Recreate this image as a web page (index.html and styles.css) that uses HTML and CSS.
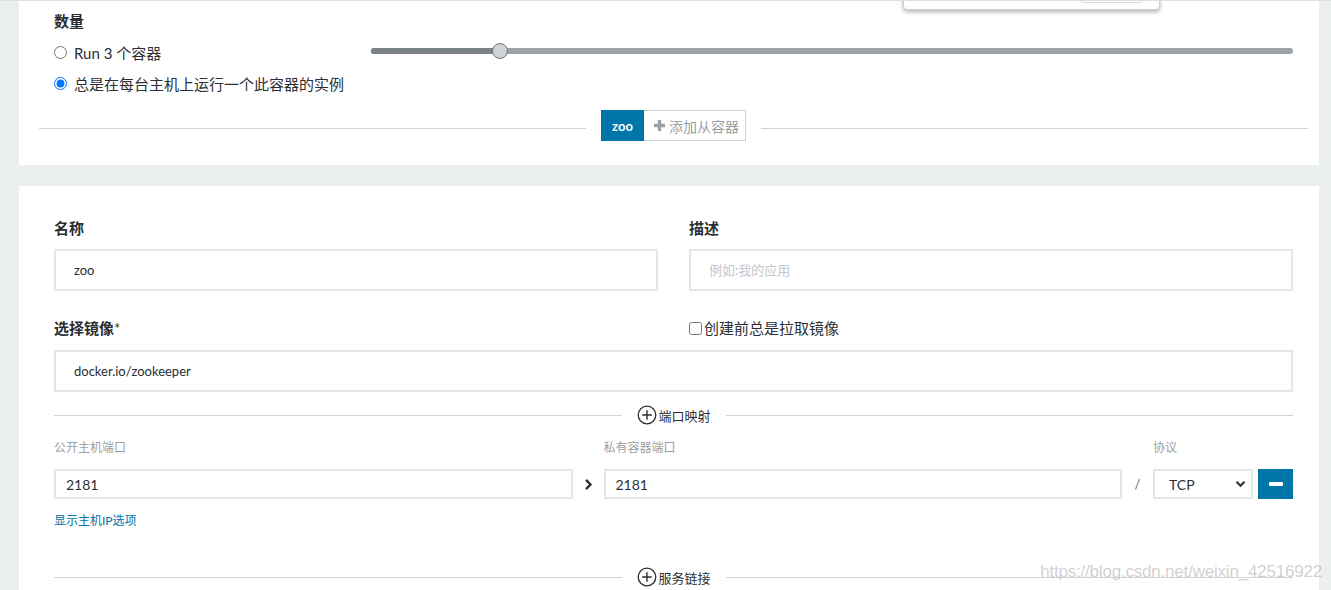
FILE: index.html
```html
<!DOCTYPE html>
<html lang="zh-CN">

<head>
    <meta charset="UTF-8">
    <meta name="viewport" content="width=device-width, initial-scale=1.0">
    <title>部署工作负载</title>
    <link rel="stylesheet" href="styles.css">
</head>

<body>

    <div class="page">
        <div class="popover"><span class="popover-btn"></span></div>

        <section class="card card-scale">
            <h4 class="heading">数量</h4>
            <div class="scale-row">
                <div class="scale-options">
                    <label class="radio"><input type="radio" name="scale">Run 3 个容器</label>
                    <label class="radio"><input type="radio" name="scale" checked>总是在每台主机上运行一个此容器的实例</label>
                </div>
                <div class="slider">
                    <div class="slider-track">
                        <div class="slider-fill"></div>
                        <span class="slider-thumb"></span>
                    </div>
                </div>
            </div>
            <div class="tabs-divider">
                <span class="line"></span>
                <div class="tab-group">
                    <button class="tab active">zoo</button>
                    <button class="tab add">
                        <svg width="13" height="13" viewBox="0 0 13 13"><path d="M6.5 1v11M1 6.5h11" stroke="#9aa1a6" stroke-width="3.4"/></svg>添加从容器
                    </button>
                </div>
                <span class="line"></span>
            </div>
        </section>

        <section class="card card-config">
            <div class="two-col">
                <div class="field">
                    <label class="field-label">名称</label>
                    <input class="text-input" type="text" value="zoo">
                </div>
                <div class="field">
                    <label class="field-label">描述</label>
                    <input class="text-input" type="text" placeholder="例如:我的应用">
                </div>
            </div>

            <div class="two-col image-row">
                <label class="field-label">选择镜像<span class="req">*</span></label>
                <label class="check"><input type="checkbox">创建前总是拉取镜像</label>
            </div>
            <input class="text-input wide" type="text" value="docker.io/zookeeper">

            <div class="section-divider">
                <span class="line"></span>
                <span class="divider-label">
                    <svg width="20" height="20" viewBox="0 0 20 20"><circle cx="10" cy="10" r="8.8" fill="none" stroke="#2b2f33" stroke-width="1.3"/><path d="M10 5.2v9.6M5.2 10h9.6" stroke="#2b2f33" stroke-width="1.4"/></svg>端口映射
                </span>
                <span class="line"></span>
            </div>

            <div class="ports">
                <span class="small-label">公开主机端口</span>
                <span></span>
                <span class="small-label">私有容器端口</span>
                <span></span>
                <span class="small-label">协议</span>
                <span></span>
                <span></span>

                <input class="port-input" type="text" value="2181">
                <span class="sep">
                    <svg width="9" height="13" viewBox="0 0 9 13"><path d="M2 1.8l4.5 4.7L2 11.2" fill="none" stroke="#2b2f33" stroke-width="2.4"/></svg>
                </span>
                <input class="port-input" type="text" value="2181">
                <span class="sep slash">/</span>
                <div class="select-wrap">
                    <select class="protocol">
                        <option>TCP</option>
                        <option>UDP</option>
                    </select>
                    <svg class="select-arrow" width="11" height="8" viewBox="0 0 11 8"><path d="M1.5 1.8l4 4 4-4" fill="none" stroke="#333" stroke-width="2.2"/></svg>
                </div>
                <span></span>
                <button class="remove-btn"><span class="bar"></span></button>
            </div>

            <a class="link" href="#">显示主机IP选项</a>

            <div class="section-divider links-divider">
                <span class="line"></span>
                <span class="divider-label">
                    <svg width="20" height="20" viewBox="0 0 20 20"><circle cx="10" cy="10" r="8.8" fill="none" stroke="#2b2f33" stroke-width="1.3"/><path d="M10 5.2v9.6M5.2 10h9.6" stroke="#2b2f33" stroke-width="1.4"/></svg>服务链接
                </span>
                <span class="line"></span>
            </div>
        </section>

        <div class="watermark">https://blog.csdn.net/weixin_42516922</div>
    </div>

</body>

</html>
```

FILE: styles.css
```css
* {
    margin: 0;
    padding: 0;
    box-sizing: border-box;
}

body {
    font-family: Lato, "Noto Sans CJK SC", sans-serif;
    background-color: #ebeff0;
    color: #2b2f33;
    overflow: hidden;
}

.page {
    position: relative;
    height: 590px;
    overflow: hidden;
    border-top: 1px solid #dde1e3;
    padding: 0 12px 0 19px;
}

.popover {
    position: absolute;
    top: -20px;
    left: 903px;
    width: 257px;
    height: 29px;
    background-color: white;
    border: 1px solid #c9ced1;
    border-radius: 4px;
    box-shadow: 0 2px 4px rgba(0, 0, 0, 0.3);
}

.popover-btn {
    position: absolute;
    right: 16px;
    bottom: 6px;
    width: 63px;
    height: 20px;
    border: 1px solid #d5d9db;
    border-radius: 3px;
}

.card {
    background-color: white;
    padding-left: 35px;
    padding-right: 26px;
}

.card-scale {
    padding-top: 10px;
    padding-bottom: 24px;
}

.heading {
    font-size: 15px;
    line-height: 20px;
    font-weight: bold;
}

.scale-row {
    display: flex;
    margin-top: 6px;
}

.scale-options {
    width: 317px;
    margin-bottom: 1px;
}

.radio {
    display: flex;
    align-items: center;
    height: 31px;
    font-size: 15px;
}

.radio input {
    width: 13px;
    height: 13px;
    margin: 0 7px 0 0;
}

.slider {
    flex: 1;
    padding-top: 11px;
}

.slider-track {
    position: relative;
    height: 6px;
    border-radius: 3px;
    background-color: #9da4a9;
}

.slider-fill {
    width: 14%;
    height: 6px;
    border-radius: 3px 0 0 3px;
    background-color: #788287;
}

.slider-thumb {
    position: absolute;
    left: 14%;
    top: -5px;
    width: 16px;
    height: 16px;
    margin-left: -8px;
    border-radius: 50%;
    background-color: #cdd3d6;
    border: 1px solid #6a7378;
}

.tabs-divider {
    display: flex;
    align-items: center;
    gap: 15px;
    margin: 10px -15px 0 -15px;
}

.tabs-divider .line,
.section-divider .line {
    flex: 1;
    height: 1px;
    background-color: #cdd3d6;
}

.tabs-divider .line {
    margin-top: 5px;
}

.tab-group {
    display: flex;
}

.tab {
    height: 31px;
    border: none;
    font-family: Lato, "Noto Sans CJK SC", sans-serif;
    cursor: pointer;
}

.tab.active {
    width: 43px;
    background-color: #0075a8;
    color: white;
    font-size: 13px;
    font-weight: bold;
}

.tab.add {
    display: flex;
    align-items: center;
    gap: 3px;
    width: 102px;
    padding-left: 9px;
    background-color: white;
    border: 1px solid #cdd3d6;
    border-left: none;
    color: #9aa1a6;
    font-size: 14px;
}

.card-config {
    margin-top: 21px;
    padding-top: 32px;
    padding-bottom: 40px;
}

.two-col {
    display: grid;
    grid-template-columns: 1fr 1fr;
    column-gap: 31px;
}

.field-label {
    display: block;
    font-size: 15px;
    line-height: 20px;
    font-weight: bold;
}

.req {
    font-weight: normal;
}

.text-input {
    display: block;
    width: 100%;
    height: 42px;
    margin-top: 11px;
    padding-left: 18px;
    border: 2px solid #e3e7e8;
    font-family: Lato, "Noto Sans CJK SC", sans-serif;
    font-size: 13px;
    color: #2b2f33;
    outline: none;
}

.text-input::placeholder {
    color: #c3c7ca;
}

.image-row {
    margin-top: 27px;
}

.check {
    display: flex;
    align-items: center;
    font-size: 15px;
    line-height: 20px;
}

.check input {
    width: 13px;
    height: 13px;
    margin: 0 2px 0 0;
}

.text-input.wide {
    margin-top: 12px;
}

.section-divider {
    display: flex;
    align-items: center;
    gap: 15px;
    height: 20px;
    margin-top: 13px;
}

.divider-label {
    display: flex;
    align-items: center;
    gap: 2px;
    font-size: 13px;
    color: #2b2f33;
}

.ports {
    display: grid;
    grid-template-columns: 1fr 31px 1fr 31px 100px 5px 35px;
    grid-template-rows: 20px 30px;
    row-gap: 11px;
    margin-top: 13px;
}

.small-label {
    font-size: 12px;
    line-height: 20px;
    color: #9a9fa3;
}

.port-input {
    height: 30px;
    padding-left: 10px;
    border: 2px solid #e3e7e8;
    font-family: Lato, "Noto Sans CJK SC", sans-serif;
    font-size: 14px;
    color: #2b2f33;
    outline: none;
}

.sep {
    display: flex;
    align-items: center;
    justify-content: center;
}

.slash {
    font-size: 13px;
    color: #666;
}

.select-wrap {
    position: relative;
}

.protocol {
    appearance: none;
    width: 100%;
    height: 30px;
    padding-left: 14px;
    border: 2px solid #e3e7e8;
    background-color: white;
    font-family: Lato, "Noto Sans CJK SC", sans-serif;
    font-size: 14px;
    color: #2b2f33;
    outline: none;
}

.select-arrow {
    position: absolute;
    right: 7px;
    top: 11px;
    pointer-events: none;
}

.remove-btn {
    display: flex;
    align-items: center;
    justify-content: center;
    background-color: #0075a8;
    border: none;
    cursor: pointer;
}

.remove-btn .bar {
    width: 14px;
    height: 4px;
    border-radius: 1px;
    background-color: white;
}

.link {
    display: block;
    margin-top: 12px;
    font-size: 12px;
    line-height: 20px;
    color: #0075a8;
    text-decoration: none;
}

.links-divider {
    margin-top: 36px;
}

.watermark {
    position: absolute;
    right: 9px;
    bottom: 8px;
    font-family: "Liberation Sans", Arial, sans-serif;
    font-size: 17px;
    color: rgba(170, 170, 170, 0.55);
    letter-spacing: -0.2px;
}
```
